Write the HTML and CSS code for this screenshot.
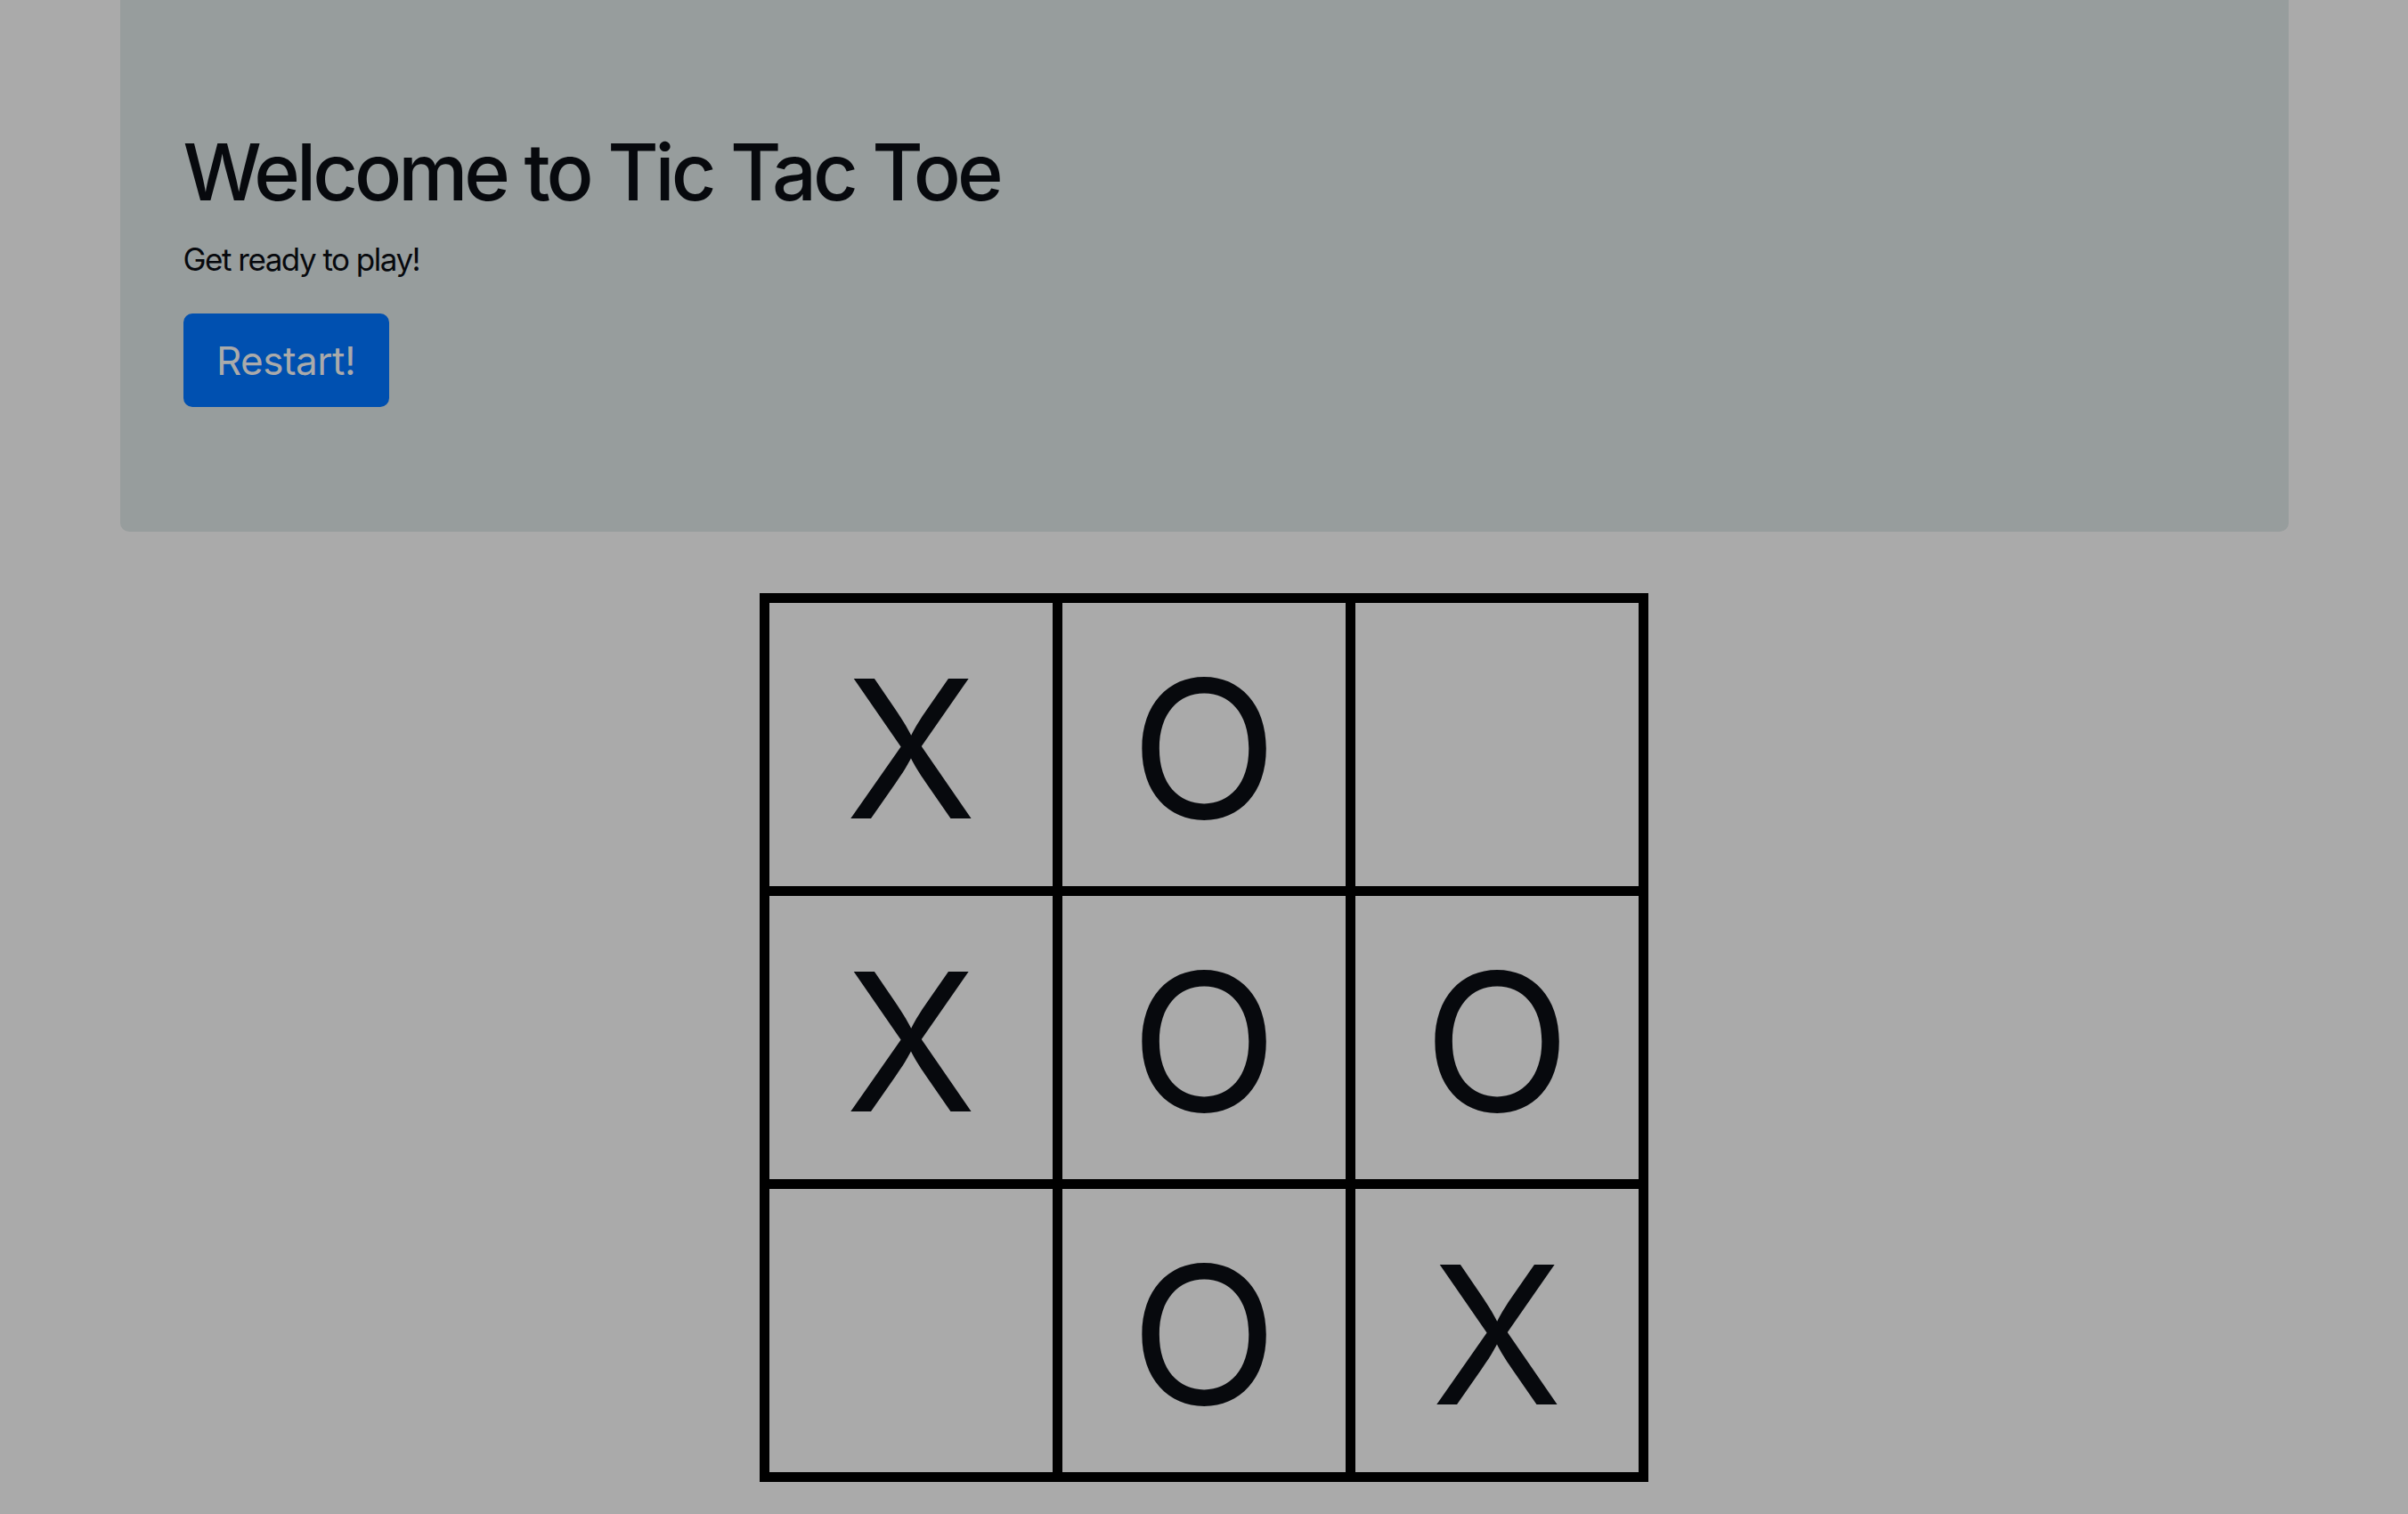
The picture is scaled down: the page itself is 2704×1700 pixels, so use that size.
FILE: index.html
```html
<!DOCTYPE html>
<html lang="en">
<head>
<meta charset="utf-8">
<title>Tic Tac Toe</title>
<link rel="stylesheet" href="styles.css">
</head>
<body>
<div class="jumbotron">
  <h1 class="title">Welcome to Tic Tac Toe</h1>
  <p class="subtitle">Get ready to play!</p>
  <button class="btn-restart" type="button">Restart!</button>
</div>
<div class="board">
  <div class="cell">X</div>
  <div class="cell">O</div>
  <div class="cell"></div>
  <div class="cell">X</div>
  <div class="cell">O</div>
  <div class="cell">O</div>
  <div class="cell"></div>
  <div class="cell">O</div>
  <div class="cell">X</div>
</div>
</body>
</html>
```
FILE: styles.css
```css
html, body {
  margin: 0;
  padding: 0;
}
body {
  background: #aaaaaa;
  font-family: Inter, "Liberation Sans", sans-serif;
  color: #07090d;
  width: 2704px;
  height: 1700px;
  overflow: hidden;
}
.jumbotron {
  width: 2435px;
  margin: 0 auto;
  box-sizing: border-box;
  height: 597px;
  padding: 141px 70px 0 71px;
  background: #979d9d;
  border-radius: 0 0 10px 10px;
}
.title {
  margin: 0 0 18px 0;
  font-size: 88px;
  font-weight: 500;
  line-height: 1.2;
  letter-spacing: -4px;
}
.subtitle {
  margin: 0 0 35px 0;
  font-size: 35px;
  line-height: 1.5;
  font-weight: 400;
  letter-spacing: -1.5px;
}
.btn-restart {
  display: block;
  box-sizing: border-box;
  width: 231px;
  height: 105px;
  padding: 0;
  background: #0050b0;
  border: 2px solid #0050b0;
  border-radius: 10px;
  color: #aaaaaa;
  font-family: Inter, "Liberation Sans", sans-serif;
  font-size: 44px;
  font-weight: 400;
  line-height: 1;
  letter-spacing: -0.5px;
}
.board {
  width: 998px;
  box-sizing: border-box;
  margin: 69px auto 0;
  display: grid;
  grid-template-columns: repeat(3, 1fr);
  grid-auto-rows: 318px;
  gap: 11px;
  padding: 11px;
  background: #000;
}
.cell {
  background: #aaaaaa;
  display: flex;
  align-items: center;
  justify-content: center;
  font-size: 216px;
  font-weight: 400;
  line-height: 1;
  padding-top: 10px;
  box-sizing: border-box;
  color: #07090d;
}
```
